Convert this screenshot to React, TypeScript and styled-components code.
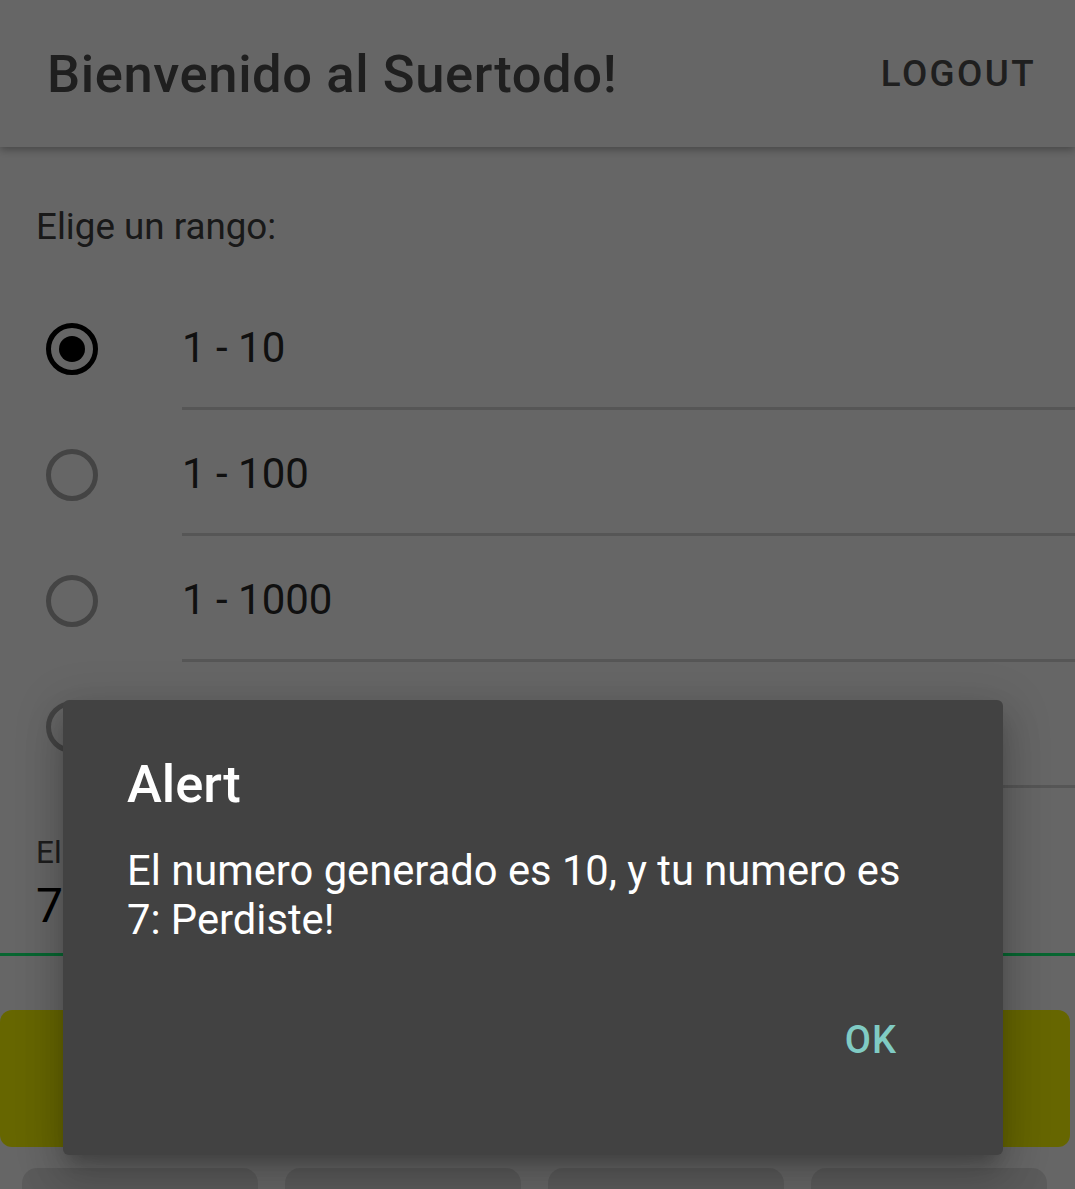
import { createGlobalStyle, styled } from "styled-components";

const GlobalStyle = createGlobalStyle`
    html, body {
        margin: 0;
        padding: 0;
        width: 1075px;
        height: 1189px;
        overflow: hidden;
        background: #ffffff;
        font-family: Roboto, "Noto Sans", "Liberation Sans", sans-serif;
    }
`;

const Screen = styled.div`
    position: relative;
    width: 1075px;
    height: 1189px;
    overflow: hidden;
    background: #ffffff;
`;

const AppBar = styled.header`
    height: 147px;
    display: flex;
    align-items: center;
    justify-content: space-between;
    padding: 0 39px 0 47px;
    box-sizing: border-box;
    background: #ffffff;
    box-shadow: 0 3px 8px rgba(0, 0, 0, 0.3);
    position: relative;
    z-index: 1;
`;

const Title = styled.h1`
    margin: 0;
    font-size: 52.5px;
    font-weight: 500;
    color: #4e4e4e;
    letter-spacing: 0.6px;
`;

const Logout = styled.button`
    border: none;
    background: none;
    padding: 0;
    font-family: inherit;
    font-size: 36.75px;
    font-weight: 500;
    letter-spacing: 2.4px;
    color: #4e4e4e;
`;

const Content = styled.main`
    padding-top: 205px;
    margin-top: -147px;
`;

const Prompt = styled.p`
    margin: 0 0 36px 36px;
    font-size: 36.75px;
    color: #404040;
    line-height: 43px;
`;

const Row = styled.label`
    display: flex;
    height: 126px;
`;

const RadioCell = styled.div`
    width: 182px;
    display: flex;
    align-items: center;
    padding-left: 46px;
    box-sizing: border-box;
`;

const Radio = styled.span<{ $checked?: boolean }>`
    width: 52px;
    height: 52px;
    border-radius: 50%;
    box-sizing: border-box;
    border: 5px solid ${(p) => (p.$checked ? "#000000" : "#aaaaaa")};
    display: flex;
    align-items: center;
    justify-content: center;
    margin-top: 3px;

    &::after {
        content: "";
        width: 26px;
        height: 26px;
        border-radius: 50%;
        background: #000000;
        display: ${(p) => (p.$checked ? "block" : "none")};
    }
`;

const RowLabel = styled.div`
    flex: 1;
    display: flex;
    align-items: center;
    border-bottom: 3px solid #d6d6d6;
    font-size: 42px;
    color: #2a2a2a;
    padding-top: 3px;
`;

const Field = styled.div`
    padding: 46px 0 0 36px;
    height: 168px;
    box-sizing: border-box;
    border-bottom: 3px solid #16ff7a;
`;

const FieldLabel = styled.div`
    font-size: 31.5px;
    color: #4a4a4a;
    line-height: 38px;
`;

const FieldValue = styled.div`
    font-size: 48px;
    color: #000000;
    line-height: 56px;
    margin-top: 6px;
`;

const PlayButton = styled.button`
    display: block;
    width: 1070px;
    height: 137px;
    margin: 54px 0 0 0;
    border: none;
    border-radius: 12px;
    background: #ffff00;
`;

const Chips = styled.div`
    display: grid;
    grid-template-columns: repeat(4, 236px);
    gap: 27px;
    padding: 21px 0 0 22px;
`;

const Chip = styled.div`
    height: 90px;
    border-radius: 15px;
    background: #e4e4e4;
`;

const Scrim = styled.div`
    position: absolute;
    inset: 0;
    background: rgba(0, 0, 0, 0.6);
    z-index: 2;
`;

const Dialog = styled.div`
    position: absolute;
    left: 63px;
    top: 700px;
    width: 940px;
    height: 455px;
    box-sizing: border-box;
    padding: 54px 64px 0 64px;
    background: #424242;
    border-radius: 6px;
    box-shadow: 0 24px 38px 3px rgba(0, 0, 0, 0.14), 0 9px 46px 8px rgba(0, 0, 0, 0.12), 0 11px 15px -7px rgba(0, 0, 0, 0.2);
    display: flex;
    flex-direction: column;
    z-index: 3;
`;

const DialogTitle = styled.h2`
    margin: 0;
    font-size: 52.5px;
    font-weight: 500;
    color: #ffffff;
    line-height: 61px;
`;

const DialogText = styled.p`
    margin: 32px 0 0 0;
    font-size: 41.7px;
    color: #ffffff;
    line-height: 48.5px;
`;

const DialogActions = styled.div`
    display: flex;
    justify-content: flex-end;
    margin-top: 74px;
    margin-right: 42px;
`;

const OkButton = styled.button`
    border: none;
    background: none;
    padding: 0;
    font-family: inherit;
    font-size: 38px;
    font-weight: 500;
    letter-spacing: 1px;
    color: #80cbc4;
`;

const ranges = ["1 - 10", "1 - 100", "1 - 1000", "1 - 10000"];

export default function App() {
    return (
        <Screen>
            <GlobalStyle />
            <AppBar>
                <Title>Bienvenido al Suertodo!</Title>
                <Logout>LOGOUT</Logout>
            </AppBar>
            <Content>
                <Prompt>Elige un rango:</Prompt>
                {ranges.map((r, i) => (
                    <Row key={r}>
                        <RadioCell>
                            <Radio $checked={i === 0} />
                        </RadioCell>
                        <RowLabel>{r}</RowLabel>
                    </Row>
                ))}
                <Field>
                    <FieldLabel>Elige un numero</FieldLabel>
                    <FieldValue>7</FieldValue>
                </Field>
                <PlayButton />
                <Chips>
                    <Chip />
                    <Chip />
                    <Chip />
                    <Chip />
                </Chips>
            </Content>
            <Scrim />
            <Dialog>
                <DialogTitle>Alert</DialogTitle>
                <DialogText>El numero generado es 10, y tu numero es 7: Perdiste!</DialogText>
                <DialogActions>
                    <OkButton>OK</OkButton>
                </DialogActions>
            </Dialog>
        </Screen>
    );
}
